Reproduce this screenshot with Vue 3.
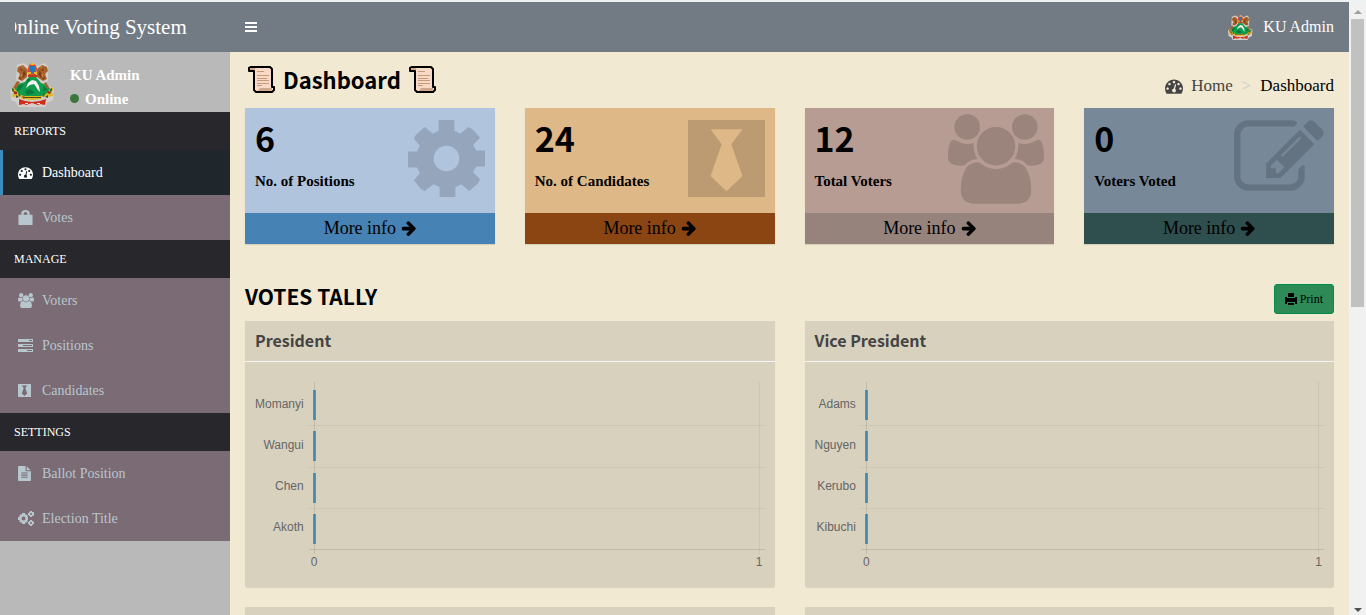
<script setup>
const icons = {
  dashboard: { box: '0 0 1792 1792', d: 'M384 1152q0-53-37.5-90.5t-90.5-37.5-90.5 37.5-37.5 90.5 37.5 90.5 90.5 37.5 90.5-37.5 37.5-90.5zm192-448q0-53-37.5-90.5t-90.5-37.5-90.5 37.5-37.5 90.5 37.5 90.5 90.5 37.5 90.5-37.5 37.5-90.5zm428 481l101-382q6-26-7.5-48.5t-38.5-29.5-48 6.5-30 39.5l-101 382q-60 5-107 43.5t-63 98.5q-20 77 20 146t117 89 146-20 89-117q16-60-6-117t-72-91zm660-33q0-53-37.5-90.5t-90.5-37.5-90.5 37.5-37.5 90.5 37.5 90.5 90.5 37.5 90.5-37.5 37.5-90.5zm-640-640q0-53-37.5-90.5t-90.5-37.5-90.5 37.5-37.5 90.5 37.5 90.5 90.5 37.5 90.5-37.5 37.5-90.5zm448 192q0-53-37.5-90.5t-90.5-37.5-90.5 37.5-37.5 90.5 37.5 90.5 90.5 37.5 90.5-37.5 37.5-90.5zm320 448q0 261-141 483-19 29-54 29h-1402q-35 0-54-29-141-221-141-483 0-182 71-348t191-286 286-191 348-71 348 71 286 191 191 286 71 348z' },
  users: { box: '64 0 1920 1792', d: 'M657 896q-162 5-265 128h-134q-82 0-138-40.5t-56-118.5q0-353 124-353 6 0 43.5 21t97.5 42.5 119 21.5q67 0 133-23-5 37-5 66 0 139 81 256zm1071 637q0 120-73 189.5t-194 69.5h-874q-121 0-194-69.5t-73-189.5q0-53 3.5-103.5t14-109 26.5-108.5 43-97.5 62-81 85.5-53.5 111.5-20q10 0 43 21.5t73 48 107 48 135 21.5 135-21.5 107-48 73-48 43-21.5q61 0 111.5 20t85.5 53.5 62 81 43 97.5 26.5 108.5 14 109 3.5 103.5zm-1024-1277q0 106-75 181t-181 75-181-75-75-181 75-181 181-75 181 75 75 181zm704 384q0 159-112.5 271.5t-271.5 112.5-271.5-112.5-112.5-271.5 112.5-271.5 271.5-112.5 271.5 112.5 112.5 271.5zm576 225q0 78-56 118.5t-138 40.5h-134q-103-123-265-128 81-117 81-256 0-29-5-66 66 23 133 23 59 0 119-21.5t97.5-42.5 43.5-21q124 0 124 353zm-128-609q0 106-75 181t-181 75-181-75-75-181 75-181 181-75 181 75 75 181z' },
  tie: { box: '128 128 1536 1536', d: 'M128 128h1536v1536h-1536v-1536zm1085 1115l-221-631 221-297h-634l221 297-221 631 317 304z' },
  edit: { box: '0 128 1792 1408', d: 'M888 1184l116-116-152-152-116 116v56h96v96h56zm440-720q-16-16-33 1l-350 350q-17 17-1 33t33-1l350-350q17-17 1-33zm80 594v190q0 119-84.5 203.5t-203.5 84.5h-832q-119 0-203.5-84.5t-84.5-203.5v-832q0-119 84.5-203.5t203.5-84.5h832q63 0 117 25 15 7 18 23 3 17-9 29l-49 49q-14 14-32 8-23-6-45-6h-832q-66 0-113 47t-47 113v832q0 66 47 113t113 47h832q66 0 113-47t47-113v-126q0-13 9-22l64-64q15-15 35-7t20 29zm-96-738l288 288-672 672h-288v-288zm444 132l-92 92-288-288 92-92q28-28 68-28t68 28l152 152q28 28 28 68t-28 68z' },
  arrow: { box: '64 53 1536 1686', d: 'M1600 960q0 54-37 91l-651 651q-39 37-91 37-51 0-90-37l-75-75q-38-38-38-91t38-91l293-293h-704q-52 0-84.5-37.5t-32.5-90.5v-128q0-53 32.5-90.5t84.5-37.5h704l-293-294q-38-36-38-90t38-90l75-75q38-38 90-38 53 0 91 38l651 651q37 35 37 90z' },
  gear: { box: '0 0 78 78', d: 'M31 0h16v11l6 3 8-7 4 2 8 9-7 7 3 6h9v16h-9l-3 6 7 7-2 4-9 8-8-7-6 3v10h-16v-10l-6-3-9 7-4-2-7-9 6-7-3-6h-9v-16h9l3-6-6-7 2-4 9-8 8 7 6-3zM39 26a13 13 0 1 0 0 26a13 13 0 1 0 0-26z' },
  lock: { box: '0 0 15 16', d: 'M0 5h3V4q0-4 4.500-4T12 4v1h3v11H0zM5.500 5h4V4q0-2-2-2t-2 2z' },
  tasks: { box: '0 0 15 13', d: 'M0 0h15v3H0zM0 5h15v3H0zM0 10h15v3H0zM11 1v1h3V1zM5 6v1h9V6zM9 11v1h5v-1z' },
  file: { box: '128 0 1536 1792', d: 'M1596 476q14 14 28 36h-472v-472q22 14 36 28zm-476 164h544v1056q0 40-28 68t-68 28h-1344q-40 0-68-28t-28-68v-1600q0-40 28-68t68-28h800v544q0 40 28 68t68 28zm160 736v-64q0-14-9-23t-23-9h-704q-14 0-23 9t-9 23v64q0 14 9 23t23 9h704q14 0 23-9t9-23zm0-256v-64q0-14-9-23t-23-9h-704q-14 0-23 9t-9 23v64q0 14 9 23t23 9h704q14 0 23-9t9-23zm0-256v-64q0-14-9-23t-23-9h-704q-14 0-23 9t-9 23v64q0 14 9 23t23 9h704q14 0 23-9t9-23z' },
  gears: { box: '0 0 16 15', d: 'M4 2h3v2l1-1 2 2-1 1h1v3H9l1 1-2 2-1-1v2H4v-2l-1 1-2-2 1-1H0V6h2L1 5l2-2 1 1zM5.500 5.500a2 2 0 1 0 0 4a2 2 0 1 0 0-4zM12 0h2v1h2v3l-1 1h-1v1h-2V5h-1V4h-1V2h1V1h1zM13 2a1 1 0 1 0 0 2a1 1 0 1 0 0-2zM12 9h2v1h1l1 1v2h-1v1h-1v1h-2v-1h-1v-1h-1v-2h1v-1h1zM13 11a1 1 0 1 0 0 2a1 1 0 1 0 0-2z' },
  bars: { box: '0 0 12 10', d: 'M0 0h12v2H0zM0 4h12v2H0zM0 8h12v2H0z' },
  print: { box: '0 0 12 12', d: 'M3 0h6v4H3zM0 4h2v1h8V4h2v7h-2V9H2v2H0zM3 10h6v2H3z' }
}

const menu = [
  { title: 'REPORTS', items: [{ label: 'Dashboard', icon: 'dashboard', active: true }, { label: 'Votes', icon: 'lock' }] },
  { title: 'MANAGE', items: [{ label: 'Voters', icon: 'users' }, { label: 'Positions', icon: 'tasks' }, { label: 'Candidates', icon: 'tie' }] },
  { title: 'SETTINGS', items: [{ label: 'Ballot Position', icon: 'file' }, { label: 'Election Title', icon: 'gears' }] }
]

const cards = [
  { value: 6, label: 'No. of Positions', icon: 'gear', tone: 'blue' },
  { value: 24, label: 'No. of Candidates', icon: 'tie', tone: 'tan' },
  { value: 12, label: 'Total Voters', icon: 'users', tone: 'rose' },
  { value: 0, label: 'Voters Voted', icon: 'edit', tone: 'slate' }
]

const charts = [
  { title: 'President', names: ['Momanyi', 'Wangui', 'Chen', 'Akoth'] },
  { title: 'Vice President', names: ['Adams', 'Nguyen', 'Kerubo', 'Kibuchi'] }
]
</script>

<template>
  <svg class="defs" width="0" height="0" aria-hidden="true">
    <symbol id="crest" viewBox="0 0 45 45">
      <path fill="#d2cfca" d="M7 3l6-2 6 3 4-4 5 4 6-3 4 3v14l-2 4 8 5-1 11-6 3-2 5-13-1-13 1-3-6-5-2-1-10 8-6-2-4z" />
      <path fill="#a8622c" d="M8 5l5-2 4 4v8l-5 4-4-2 2-5-3-3zM37 5l-5-2-5 4v8l6 4 4-2-2-5 3-3z" />
      <path fill="#75401a" d="M10 6l3 2-2 1zM14 8l2 4-3 4-1-2 1-3zM34 6l-3 2 2 1zM30 8l-2 4 3 4 1-2-1-3zM9 15l3 1-2 2zM35 15l-3 1 2 2z" />
      <path fill="#d08a48" d="M12 4l2 1-1 1zM32 4l-2 1 1 1zM11 12l2 1-2 2zM33 12l-2 1 2 2z" />
      <path fill="#e04a28" d="M19 3l3-2 4 2 1 4-1 7h-7l-2-5z" />
      <path fill="#f3b622" d="M18 10h3v2h-3zM24 10h3v2h-3zM20 2l2-1 3 1-1 1h-3z" />
      <path fill="#2677b8" d="M20 4h5v5l-2 3-3-3z" />
      <path fill="#b93a1c" d="M18 13h9v2h-9z" />
      <path fill="#0f9c4c" d="M4 28l4-6 7-2 4-5h7l5 6 6 2 4 5-5 6-10 1H15L8 33z" />
      <path fill="#087a3c" d="M8 24l6-2-4 6-3 1zM17 17l4-1-5 7zM15 29l5-2 5 4-8 2zM34 24l4 4-5 1z" />
      <path fill="#f4f6f0" d="M18 21l4-3 4 1 3 5 1 6-2-2-4-6-4 1-4 3z" />
      <path fill="#a8622c" d="M7 19l3 1-2 4-3 3-2-1zM36 20l-2 1 3 5 3 1z" />
      <path fill="#dcb820" d="M1 25l4 2 4 5 5 2h17l5-2 4-5 4-2-2 5 1 4-6 1-4-1-2 3-9 1-10-1-2-3-8 1 1-4z" />
      <path fill="#a3271a" d="M4 29l3 1v2H4zM38 29l3 1-1 2-3-1zM12 34l3 1-1 2z" />
      <path fill="#286f3c" d="M2 26l2 1v3l-2-1zM42 26l-2 1v3l2-1zM8 31l3 2-2 2zM35 31l-3 2 2 2z" />
      <path fill="#4d4a1b" d="M14 35h17v1H14zM6 33l3 2-3 1zM38 33l-3 2 3 1z" />
      <path fill="#d02b1b" d="M9 37l6 2 7 1 8-1 6-2-1 6-5-1-2 1-6-2-6 2-2-1-5 1z" />
      <path fill="#f5e4cf" d="M15 41h3v1h-3zM27 41h3v1h-3z" />
    </symbol>
    <symbol id="scroll" viewBox="0 0 27 27">
      <path fill="#f8d9c8" stroke="#000" stroke-width="2" stroke-linejoin="round" d="M1 4V2l2-1h19l2 2v18h2v3l-2 2H8l-2-2V5H1z" />
      <path fill="#cfa78e" d="M2 2h5v2H2zM12 22h12v2l-2 1H10z" />
      <path stroke="#c79b78" stroke-width="1" d="M9 5.500h7M9 9.500h12M9 12.500h10M9 14.500h12M9 17.500h12M9 19.500h5" />
    </symbol>
  </svg>

  <div class="page">
    <div class="app">
      <header class="topbar">
        <a class="logo" href="#"><span>Online Voting System</span></a>
        <button class="toggle" aria-label="Toggle navigation">
          <svg :viewBox="icons.bars.box"><path :d="icons.bars.d" /></svg>
        </button>
        <a class="account" href="#"><svg><use href="#crest" /></svg>KU Admin</a>
      </header>

      <div class="body">
        <aside class="sidebar">
          <div class="user">
            <svg class="avatar"><use href="#crest" /></svg>
            <div class="who">
              <p>KU Admin</p>
              <a href="#"><i class="dot"></i>Online</a>
            </div>
          </div>
          <nav>
            <section v-for="group in menu" :key="group.title">
              <h2>{{ group.title }}</h2>
              <a v-for="item in group.items" :key="item.label" href="#" :class="{ active: item.active }">
                <span class="glyph"><svg :class="item.icon" :viewBox="icons[item.icon].box"><path fill-rule="evenodd" :d="icons[item.icon].d" /></svg></span>
                {{ item.label }}
              </a>
            </section>
          </nav>
        </aside>

        <main>
          <div class="heading">
            <h1><svg><use href="#scroll" /></svg>Dashboard<svg><use href="#scroll" /></svg></h1>
            <nav class="crumbs">
              <a href="#"><svg :viewBox="icons.dashboard.box"><path fill-rule="evenodd" :d="icons.dashboard.d" /></svg>Home</a>
              <span class="sep">&gt;</span>
              <span>Dashboard</span>
            </nav>
          </div>

          <div class="cards">
            <article v-for="card in cards" :key="card.label" class="card" :class="card.tone">
              <div class="inner">
                <div>
                  <h3>{{ card.value }}</h3>
                  <p>{{ card.label }}</p>
                </div>
                <svg :class="card.icon" :viewBox="icons[card.icon].box"><path fill-rule="evenodd" :d="icons[card.icon].d" /></svg>
              </div>
              <a href="#">More info <svg :viewBox="icons.arrow.box"><path :d="icons.arrow.d" /></svg></a>
            </article>
          </div>

          <div class="tally">
            <h2>VOTES TALLY</h2>
            <button><svg :viewBox="icons.print.box"><path :d="icons.print.d" /></svg>Print</button>
          </div>

          <div class="charts">
            <section v-for="chart in charts" :key="chart.title" class="box">
              <h4>{{ chart.title }}</h4>
              <div class="chart">
                <div class="labels"><span v-for="name in chart.names" :key="name">{{ name }}</span></div>
                <div class="plot">
                  <div v-for="name in chart.names" :key="name" class="row"><i></i></div>
                </div>
                <div class="ticks"><span>0</span><span>1</span></div>
              </div>
            </section>
            <section class="box"></section>
            <section class="box"></section>
          </div>
        </main>
      </div>
    </div>

    <div class="scrollbar" aria-hidden="true">
      <svg viewBox="0 0 8 4"><path fill="#a0a0a0" d="M4 0l4 4H0z" /></svg>
      <div class="thumb"></div>
      <svg class="down" viewBox="0 0 8 4"><path fill="#505050" d="M0 0h8L4 4z" /></svg>
    </div>
  </div>
</template>

<style>
body { margin: 0; background: #f1e9d2; overflow: hidden; }
</style>

<style scoped>
* { box-sizing: border-box; }
h1, h2, h3, h4, p { margin: 0; }
a { color: inherit; text-decoration: none; }
button { font: inherit; cursor: pointer; }
svg { fill: currentColor; flex: none; }
.defs { position: absolute; }
.page {
  display: flex;
  height: 100vh;
  overflow: hidden;
  border-top: 2px solid #eff2f3;
  font-family: "Liberation Serif", "Times New Roman", serif;
  font-size: 14px;
  color: #000;
}
.app { flex: 1; min-width: 0; display: flex; flex-direction: column; }
.topbar { display: flex; align-items: center; height: 50px; flex: none; background: #727b84; color: #fff; }
.logo { width: 200px; margin: 0 15px; overflow: hidden; white-space: nowrap; font-size: 21px; line-height: 50px; }
.logo span { margin-left: -13px; }
.toggle { display: flex; padding: 15px; border: 0; background: none; color: #fff; }
.toggle svg { width: 12px; height: 10px; }
.account { display: flex; align-items: center; gap: 10px; margin-left: auto; padding-right: 15px; font-size: 16px; }
.account svg { width: 25px; height: 25px; }

.body { flex: 1; min-height: 0; display: flex; }
.sidebar { width: 230px; flex: none; background: #b9b9b9; }
.user { display: flex; align-items: center; gap: 15px; height: 60px; padding: 4px 10px 0; color: #fff; font-weight: bold; font-size: 15px; }
.avatar { width: 45px; height: 45px; }
.who { line-height: 24px; padding-top: 5px; }
.who a { display: flex; align-items: center; gap: 6px; }
.dot { width: 9px; height: 9px; border-radius: 50%; background: #3c763d; }
.sidebar h2 { padding: 0 14px; font-size: 12px; line-height: 38px; font-weight: normal; color: #fff; background: #28272c; }
.sidebar section > a { display: flex; align-items: center; height: 45px; padding-left: 15px; border-left: 3px solid #7b6b75; background: #7b6b75; color: #b8c7ce; }
.sidebar section > a.active { background: #1f272c; border-left-color: #3c8dbc; color: #fff; }
.glyph { display: flex; width: 24px; }
.glyph svg { width: 15px; height: 15px; }
.glyph svg.tie { width: 13px; height: 13px; }
.glyph svg.file { width: 13px; height: 15px; }
.glyph svg.users, .glyph svg.gears { width: 16px; }

main { flex: 1; min-width: 0; padding: 0 15px; background: #f1e9d2; }
.heading { display: flex; justify-content: space-between; height: 56px; }
h1, h3, h4, .tally h2 { font-family: "Noto Sans CJK SC", sans-serif; font-weight: bold; }
h1 { display: flex; align-items: center; gap: 8px; padding: 0 0 2px 3px; font-size: 22px; }
h1 svg { width: 27px; height: 27px; }
.crumbs { display: flex; align-items: center; gap: 9px; padding-top: 12px; font-size: 17px; }
.crumbs a { display: flex; align-items: center; gap: 8px; color: #444; }
.crumbs a svg { width: 18px; height: 18px; }
.crumbs .sep { color: #ccc; }

.cards { display: grid; grid-template-columns: repeat(4, 1fr); gap: 30px; }
.card { box-shadow: 0 1px 1px rgba(0, 0, 0, .1); }
.inner { display: flex; justify-content: space-between; height: 105px; padding: 10px; }
.inner h3 { font-size: 34px; line-height: 40px; }
.inner p { margin-top: 13px; font-size: 15px; line-height: 20px; font-weight: bold; }
.inner svg { width: 77px; height: 77px; margin-top: 2px; opacity: .15; }
.inner svg.users { width: 96px; height: 90px; margin-top: -4px; }
.inner svg.edit { width: 90px; height: 71px; }
.card a { display: flex; align-items: center; justify-content: center; gap: 5px; height: 31px; font-size: 18px; }
.card a svg { width: 15px; height: 16px; margin-bottom: 2px; }
.blue { background: #b0c4de; }
.blue a { background: #4682b4; }
.tan { background: #deb887; }
.tan a { background: #8b4513; }
.rose { background: #b69c92; }
.rose a { background: #96837c; }
.slate { background: #778899; }
.slate a { background: #2f4f4f; }

.tally { display: flex; align-items: center; justify-content: space-between; margin: 40px 0 7px; height: 30px; }
.tally h2 { padding-bottom: 6px; font-size: 21px; line-height: 30px; }
.tally button { display: flex; align-items: center; gap: 3px; height: 30px; padding: 0 10px; border: 1px solid #008d4c; border-radius: 3px; background: #2e8b57; font-size: 12px; color: #000; }
.tally button svg { width: 12px; height: 12px; }

.charts { display: grid; grid-template-columns: 1fr 1fr; gap: 20px 30px; }
.box { min-height: 60px; background: #d8d1be; border-radius: 0 0 3px 3px; box-shadow: 0 1px 1px rgba(0, 0, 0, .1); }
.box h4 { height: 41px; padding: 0 10px; border-bottom: 1px solid #f4f4f4; font-size: 16px; line-height: 38px; color: #444; }
.chart { display: grid; grid-template-columns: max-content 1fr; column-gap: 5px; padding: 20px 10px 17px; font: 12px "Liberation Sans", Arial, sans-serif; color: #666; }
.labels { display: grid; grid-template-rows: repeat(4, 1fr); align-items: center; text-align: right; padding: 1px 0 6px; }
.plot { position: relative; display: grid; grid-template-rows: repeat(4, 1fr); height: 172px; padding: 3px 0 4px; }
.plot::before, .plot::after { content: ""; position: absolute; top: 0; bottom: 0; width: 1px; background: rgba(0, 0, 0, .1); }
.plot::before { left: 5px; }
.plot::after { right: 5px; background: rgba(0, 0, 0, .05); }
.row { display: flex; align-items: center; border-bottom: 1px solid rgba(0, 0, 0, .05); }
.row:last-child { border-color: rgba(0, 0, 0, .1); }
.row i { width: 3px; height: 30px; margin-left: 4px; background: #4b97c1; }
.ticks { grid-column: 2; display: flex; justify-content: space-between; padding: 0 2px; line-height: 16px; }

.scrollbar { width: 17px; flex: none; display: flex; flex-direction: column; align-items: center; padding: 8px 0 3px; background: #f1f1f1; }
.scrollbar svg { width: 8px; height: 4px; }
.thumb { width: 13px; height: 288px; margin-top: 5px; background: #c1c1c1; }
.scrollbar .down { margin-top: auto; }
</style>
